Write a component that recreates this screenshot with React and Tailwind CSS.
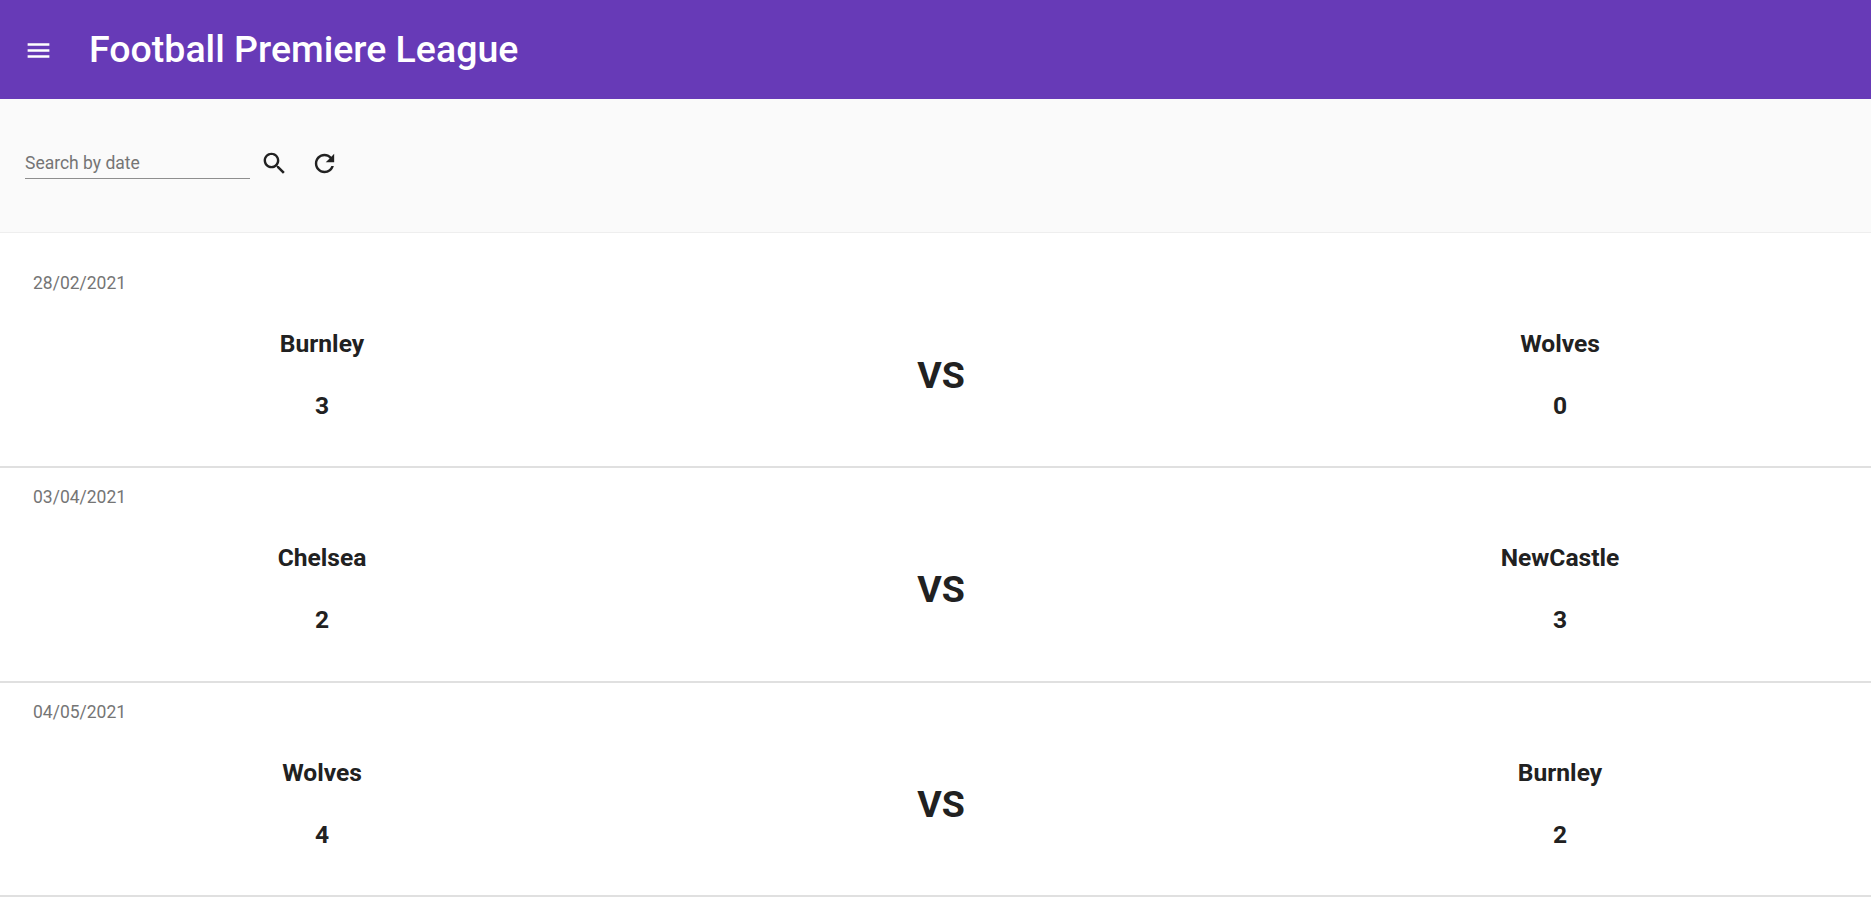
import React from "react";

const matches = [
  { date: "28/02/2021", home: "Burnley", homeScore: 3, away: "Wolves", awayScore: 0, pad: "pt-[38px] pb-[44px]" },
  { date: "03/04/2021", home: "Chelsea", homeScore: 2, away: "NewCastle", awayScore: 3, pad: "pt-[17px] pb-[45px]" },
  { date: "04/05/2021", home: "Wolves", homeScore: 4, away: "Burnley", awayScore: 2, pad: "pt-[17px] pb-[44px]" },
];

function Team({ name, score }) {
  return (
    <div className="flex flex-col items-center text-[24.6px] font-bold leading-[32px] text-[#212121] gap-[30px]">
      <div>{name}</div>
      <div>{score}</div>
    </div>
  );
}

function Match({ m }) {
  return (
    <section className={`bg-white border-b-2 border-[#e0e0e0] pl-[33px] pr-[17px] ${m.pad}`}>
      <div className="text-[17.5px] leading-[24px] text-[#757575]">{m.date}</div>
      <div className="grid grid-cols-3 gap-[31px] -ml-[5px] mt-[33px] items-center">
        <Team name={m.home} score={m.homeScore} />
        <div className="text-center text-[37.5px] leading-[44px] font-bold text-[#212121]">VS</div>
        <Team name={m.away} score={m.awayScore} />
      </div>
    </section>
  );
}

export default function App() {
  return (
    <div className="min-h-[898px] bg-white font-['Roboto',sans-serif] overflow-hidden">
      <header className="h-[99px] bg-[#673ab7] flex items-center pl-[24px] text-white">
        <svg viewBox="0 0 24 24" fill="currentColor" className="w-[29px] h-[29px] mt-[2px]" aria-label="menu">
          <path d="M3 18h18v-2H3v2zm0-5h18v-2H3v2zm0-7v2h18V6H3z" />
        </svg>
        <h1 className="ml-[36px] -mt-[2px] text-[37.5px] leading-[48px] font-medium">Football Premiere League</h1>
      </header>
      <div className="h-[134px] bg-[#fafafa] border-b border-[#eeeeee] flex items-start pl-[25px] pt-[50px]">
        <div className="w-[225px] h-[30px] border-b border-[#8e8e8e] text-[17.5px] leading-[28px] text-[#757575]">Search by date</div>
        <svg viewBox="0 0 24 24" fill="#212121" className="w-[29px] h-[29px] ml-[10px]" aria-label="search">
          <path d="M15.5 14h-.79l-.28-.27C15.41 12.59 16 11.11 16 9.5 16 5.91 13.09 3 9.5 3S3 5.91 3 9.5 5.91 16 9.5 16c1.61 0 3.09-.59 4.23-1.57l.27.28v.79l5 4.99L20.49 19l-4.99-5zm-6 0C7.01 14 5 11.99 5 9.5S7.01 5 9.5 5 14 7.01 14 9.5 11.99 14 9.5 14z" />
        </svg>
        <svg viewBox="0 0 24 24" fill="#212121" className="w-[29px] h-[29px] ml-[21px]" aria-label="refresh">
          <path d="M17.65 6.35C16.2 4.9 14.21 4 12 4c-4.42 0-7.99 3.58-7.99 8s3.57 8 7.99 8c3.73 0 6.84-2.55 7.73-6h-2.08c-.82 2.33-3.04 4-5.65 4-3.31 0-6-2.69-6-6s2.69-6 6-6c1.66 0 3.14.69 4.22 1.78L13 11h7V4l-2.35 2.35z" />
        </svg>
      </div>
      {matches.map((m) => (
        <Match key={m.date} m={m} />
      ))}
    </div>
  );
}
